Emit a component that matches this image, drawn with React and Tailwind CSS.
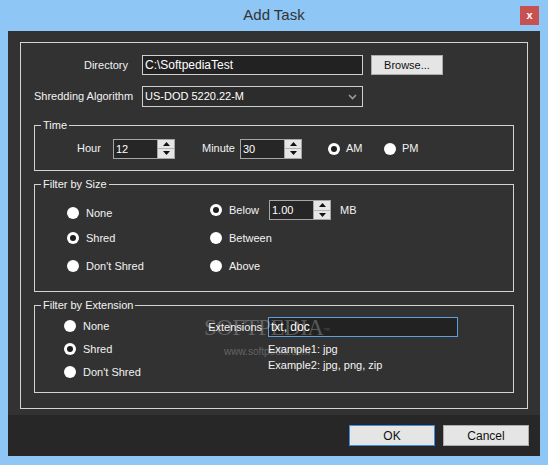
import { useState } from 'react'

const Spinner = ({ value }) => (
  <div className="flex h-[20px] w-[62px] border border-[#a6a6a6] bg-[#262626]">
    <div className="flex-1 pl-[2px] leading-[18px] text-white">{value}</div>
    <div className="flex w-[17px] flex-col border-l border-[#a6a6a6] bg-[#e6e6e6]">
      <div className="flex flex-1 items-center justify-center border-b border-[#b5b5b5]">
        <svg width="7" height="4" viewBox="0 0 7 4">
          <path d="M3.5 0 L7 4 L0 4 Z" fill="#111" />
        </svg>
      </div>
      <div className="flex flex-1 items-center justify-center">
        <svg width="7" height="4" viewBox="0 0 7 4">
          <path d="M0 0 L7 0 L3.5 4 Z" fill="#111" />
        </svg>
      </div>
    </div>
  </div>
)

const Radio = ({ label, checked, gap = 'ml-[7px]' }) => (
  <div className="flex h-[20px] items-center">
    <span className="flex h-[12px] w-[12px] items-center justify-center rounded-full bg-white">
      {checked && <span className="h-[6px] w-[6px] rounded-full bg-[#1e1e1e]" />}
    </span>
    <span className={gap}>{label}</span>
  </div>
)

const Group = ({ title, className, children }) => (
  <div className={`relative border border-[#d4d4d4] ${className}`}>
    <span className="absolute -top-[8px] left-[6px] bg-[#323232] px-[2px] leading-[14px]">
      {title}
    </span>
    {children}
  </div>
)

const App = () => {
  const [dir] = useState('C:\\SoftpediaTest')

  return (
    <div
      className="flex h-[465px] w-[548px] flex-col bg-[#8ec6f5] text-[11px] text-[#f2f2f2]"
      style={{ fontFamily: '"Liberation Sans", Arial, sans-serif' }}
    >
      {/* title bar */}
      <div className="grid h-[31px] grid-cols-[1fr_auto_1fr]">
        <div />
        <div className="pt-[6px] text-[15px] leading-[18px] text-[#333]">Add Task</div>
        <div className="flex justify-end pr-[9px] pt-[6px]">
          <div className="flex h-[19px] w-[19px] items-center justify-center bg-[#c75050] text-[11px] font-bold leading-none text-white">
            x
          </div>
        </div>
      </div>

      {/* client */}
      <div className="mx-[8px] flex h-[425px] flex-col bg-[#323232]">
        <div className="h-[384px] px-[12px] pt-[11px]">
          <div className="h-[367px] border border-[#d4d4d4] px-[13px]">
            {/* directory */}
            <div className="mt-[12px] flex h-[20px] items-center">
              <span className="w-[94px] text-right">Directory</span>
              <div className="ml-[14px] h-[20px] w-[221px] border border-[#d0d0d0] bg-[#222] pl-[2px] text-[12px] leading-[18px] text-white">
                {dir}
              </div>
              <button className="ml-[8px] h-[20px] w-[72px] border border-[#acacac] bg-[#e5e5e5] text-[#111]">
                Browse...
              </button>
            </div>

            {/* algorithm */}
            <div className="mt-[11px] flex h-[21px] items-center">
              <span className="w-[97px] whitespace-nowrap text-right">Shredding Algorithm</span>
              <div className="ml-[11px] flex h-[21px] w-[221px] items-center justify-between border border-[#cfcfcf] bg-[#2c2c2c] pl-[2px] pr-[5px] text-white">
                <span>US-DOD 5220.22-M</span>
                <svg width="9" height="6" viewBox="0 0 9 6">
                  <path d="M1 1 L4.5 4.5 L8 1" stroke="#9a9a9a" strokeWidth="1.6" fill="none" />
                </svg>
              </div>
            </div>

            {/* time */}
            <Group title="Time" className="mt-[18px] h-[46px]">
              <div className="flex h-full items-center pl-[42px] pt-[1px]">
                <span className="w-[36px]">Hour</span>
                <Spinner value="12" />
                <span className="w-[65px] pr-[5px] text-right">Minute</span>
                <Spinner value="30" />
                <div className="ml-[26px] w-[56px]">
                  <Radio label="AM" checked gap="ml-[6px]" />
                </div>
                <Radio label="PM" gap="ml-[6px]" />
              </div>
            </Group>

            {/* size */}
            <Group title="Filter by Size" className="mt-[13px] h-[108px]">
              <div className="flex">
                <div className="ml-[32px] w-[143px] pt-[18px]">
                  <Radio label="None" />
                  <div className="mt-[5px]">
                    <Radio label="Shred" checked />
                  </div>
                  <div className="mt-[8px]">
                    <Radio label="Don't Shred" />
                  </div>
                </div>
                <div className="pt-[15px]">
                  <div className="flex h-[20px] items-center">
                    <div className="w-[59px]">
                      <Radio label="Below" checked />
                    </div>
                    <Spinner value="1.00" />
                    <span className="ml-[9px]">MB</span>
                  </div>
                  <div className="mt-[8px]">
                    <Radio label="Between" />
                  </div>
                  <div className="mt-[8px]">
                    <Radio label="Above" />
                  </div>
                </div>
              </div>
            </Group>

            {/* extension */}
            <Group title="Filter by Extension" className="mt-[13px] h-[88px]">
              <div className="flex">
                <div className="ml-[29px] w-[144px] pt-[10px]">
                  <Radio label="None" />
                  <div className="mt-[3px]">
                    <Radio label="Shred" checked />
                  </div>
                  <div className="mt-[3px]">
                    <Radio label="Don't Shred" />
                  </div>
                </div>
                <div className="pt-[11px]">
                  <div className="flex h-[20px] items-center">
                    <span className="w-[60px] pr-[6px] text-right">Extensions</span>
                    <div className="h-[20px] w-[190px] border border-[#5b9fdc] bg-[#222] pl-[2px] text-[12px] leading-[18px] text-white">
                      txt, doc
                    </div>
                  </div>
                  <div className="ml-[60px] mt-[4px] leading-[16px]">Example1: jpg</div>
                  <div className="ml-[60px] leading-[16px]">Example2: jpg, png, zip</div>
                </div>
              </div>
              {/* watermark over the content */}
              <div className="pointer-events-none absolute left-[169px] top-[8px] text-white/25">
                <div
                  className="text-[23px] leading-[28px] tracking-[-0.5px]"
                  style={{ fontFamily: '"Liberation Serif", serif' }}
                >
                  SOFTPEDIA<sup className="text-[6px]">™</sup>
                </div>
                <div className="ml-[20px] mt-[2px] text-[10px]">www.softpedia.com</div>
              </div>
            </Group>
          </div>
        </div>

        {/* buttons */}
        <div className="flex h-[41px] justify-end gap-[8px] bg-[#272727] pr-[11px] pt-[10px]">
          <button className="h-[21px] w-[86px] border border-[#3c8fe0] bg-[#e5e5e5] text-[12px] text-[#111]">
            OK
          </button>
          <button className="h-[21px] w-[86px] border border-[#acacac] bg-[#e5e5e5] text-[12px] text-[#111]">
            Cancel
          </button>
        </div>
      </div>
    </div>
  )
}

export default App
